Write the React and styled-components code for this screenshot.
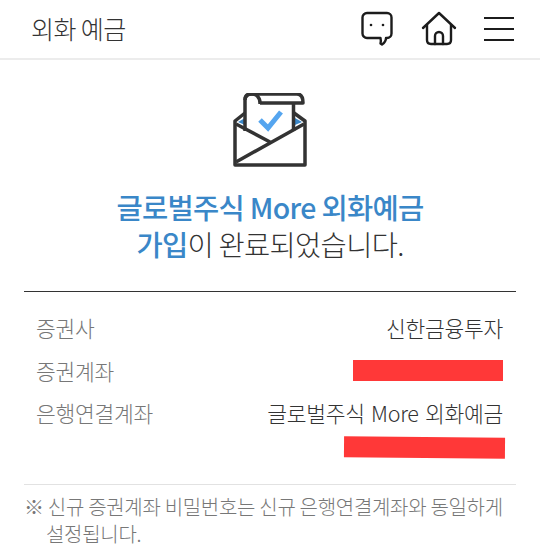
import React from 'react';
import styled, { createGlobalStyle } from 'styled-components';

const GlobalStyle = createGlobalStyle`
  html, body {
    margin: 0;
    padding: 0;
    background: #fff;
  }
  body {
    font-family: "Noto Sans CJK KR", "Noto Sans", sans-serif;
    font-weight: 300;
  }
`;

const Page = styled.div`
  width: 540px;
  height: 554px;
  overflow: hidden;
  background: #fff;
  color: #333;
`;

const Header = styled.header`
  height: 58px;
  display: flex;
  align-items: center;
  justify-content: space-between;
  padding: 0 26px 0 31px;
  border-bottom: 2px solid #ececec;
`;

const Title = styled.h1`
  margin: 0 0 3px;
  font-size: 25px;
  font-weight: 300;
  letter-spacing: -0.6px;
  color: #333;
`;

const HeaderIcons = styled.div`
  display: flex;
  align-items: center;
  gap: 27px;
`;

const Hero = styled.section`
  display: flex;
  flex-direction: column;
  align-items: center;
  padding-top: 33px;
`;

const Message = styled.p`
  margin: 21px 0 0;
  font-size: 28.500px;
  line-height: 37px;
  font-weight: 300;
  letter-spacing: -0.7px;
  text-align: center;
  color: #333;
`;

const Accent = styled.span`
  color: #3a87c8;
  font-weight: 500;
  letter-spacing: -0.7px;
`;

const Details = styled.dl`
  margin: 29px 24px 0;
  padding: 15px 13px 0 12px;
  height: 194px;
  box-sizing: border-box;
  border-top: 1.500px solid #333;
  border-bottom: 1px solid #e2e2e2;
  display: grid;
  grid-template-columns: auto 1fr;
  align-content: start;
`;

const Term = styled.dt`
  font-size: 21.500px;
  line-height: 42.500px;
  color: #777;
  letter-spacing: -0.3px;
`;

const Value = styled.dd`
  margin: 0;
  display: flex;
  flex-direction: column;
  align-items: flex-end;
  font-size: 21.500px;
  line-height: 42.500px;
  color: #333;
  letter-spacing: -0.3px;
  word-spacing: 2px;
`;

const Redaction = styled.div`
  background: #ff3838;
  width: ${(p) => p.$width}px;
  height: ${(p) => p.$height}px;
  margin-right: ${(p) => p.$right || 0}px;
  margin-top: ${(p) => p.$top || 0}px;
  transform: rotate(${(p) => p.$tilt || 0}deg);
`;

const Note = styled.p`
  margin: 9px 30px 0 24px;
  padding-left: 22px;
  text-indent: -22px;
  font-size: 20px;
  line-height: 26.500px;
  color: #777;
  letter-spacing: -0.3px;
  word-break: keep-all;
`;

function ChatIcon() {
  return (
    <svg width="34" height="36" viewBox="0 0 34 36" fill="none" stroke="#1c1c1c" strokeWidth="2.400" strokeLinejoin="round" strokeLinecap="round">
      <path d="M7 2h20c2.500 0 4.500 2 4.500 4.500v16c0 2.500-2 4.500-4.500 4.500h-1c0 2.500-1 4.500-4 6.500l-1.500-1c.5-2 .5-3.500 0-5.500H7c-2.500 0-4.500-2-4.500-4.500v-16C2.500 4 4.500 2 7 2z" />
      <circle cx="11" cy="14" r="1.300" fill="#1c1c1c" stroke="none" />
      <circle cx="23" cy="14" r="1.300" fill="#1c1c1c" stroke="none" />
    </svg>
  );
}

function HomeIcon() {
  return (
    <svg width="36" height="36" viewBox="0 0 36 36" fill="none" stroke="#1c1c1c" strokeWidth="2.400" strokeLinejoin="round" strokeLinecap="round">
      <path d="M2 17 18 2l16 15" />
      <path d="M6 14v15c0 2.500 1.500 4 4 4h16c2.500 0 4-1.500 4-4V14" />
      <path d="M14 33v-8a4 4 0 0 1 8 0v8" />
    </svg>
  );
}

function MenuIcon() {
  return (
    <svg width="30" height="26" viewBox="0 0 30 26" stroke="#1c1c1c" strokeWidth="2.200">
      <path d="M0 2h30M0 13h30M0 24h30" />
    </svg>
  );
}

function MailCheckIcon() {
  return (
    <svg width="74" height="74" viewBox="0 0 74 74" fill="none">
      <path d="M5 29l7-4v7z" fill="#3a87c8" />
      <path d="M69 29l-7-4v7z" fill="#3a87c8" />
      <path d="M12 38V7c0-4 2-6 6-6h46c4 0 6 3 6 9H27" stroke="#333" strokeWidth="3.500" strokeLinejoin="round" />
      <path d="M12 7c0-4 3-6 7-6s8 3 8 9v1" stroke="#333" strokeWidth="3.500" strokeLinejoin="round" />
      <path d="M60.500 10v28" stroke="#333" strokeWidth="3.500" />
      <path d="M27 27l8 8 13-16" stroke="#55a5ef" strokeWidth="5" />
      <path d="M12 20 2 28v44h70V28L61 20" stroke="#333" strokeWidth="3.500" strokeLinejoin="round" />
      <path d="M3 31l34 18M71 31 3 69" stroke="#333" strokeWidth="3.500" />
    </svg>
  );
}

export default function App() {
  return (
    <Page>
      <GlobalStyle />
      <Header>
        <Title>외화 예금</Title>
        <HeaderIcons>
          <ChatIcon />
          <HomeIcon />
          <MenuIcon />
        </HeaderIcons>
      </Header>
      <Hero>
        <MailCheckIcon />
        <Message>
          <Accent>글로벌주식 More 외화예금</Accent>
          <br />
          <Accent>가입</Accent>이 완료되었습니다.
        </Message>
      </Hero>
      <Details>
        <Term>증권사</Term>
        <Value>신한금융투자</Value>
        <Term>증권계좌</Term>
        <Value>
          <Redaction $width={150} $height={21} $top={10} />
        </Value>
        <Term>은행연결계좌</Term>
        <Value>
          글로벌주식 More 외화예금
          <Redaction $width={161} $height={21} $right={-2} $top={2} $tilt={0.5} />
        </Value>
      </Details>
      <Note>※ 신규 증권계좌 비밀번호는 신규 은행연결계좌와 동일하게 설정됩니다.</Note>
    </Page>
  );
}
